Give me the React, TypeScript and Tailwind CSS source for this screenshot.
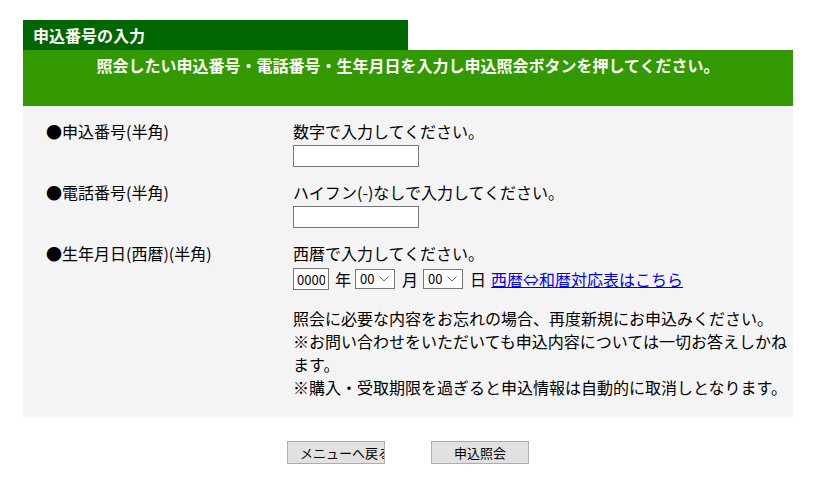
import React from "react"

const FONT = "font-['Noto_Sans_CJK_JP',sans-serif]"

function Chevron() {
  return (
    <svg
      width="10"
      height="6"
      viewBox="0 0 10 6"
      className="pointer-events-none absolute right-[6px] top-1/2 -translate-y-1/2"
    >
      <path d="M0.5 0.5 L5 5 L9.5 0.5" fill="none" stroke="#666" strokeWidth="1" />
    </svg>
  )
}

function SmallSelect() {
  return (
    <div className="relative h-[20px] w-[40px]">
      <select
        defaultValue="00"
        className={`${FONT} block h-[20px] w-[40px] appearance-none border border-[#767676] bg-white py-0 pl-[4px] text-[13px] leading-[18px] text-black`}
      >
        <option value="00">00</option>
      </select>
      <Chevron />
    </div>
  )
}

function Row({
  label,
  children,
}: {
  label: string
  children: React.ReactNode
}) {
  return (
    <div className="flex">
      <div className="w-[247px] shrink-0">{label}</div>
      <div className="w-[500px]">{children}</div>
    </div>
  )
}

function TextBox() {
  return (
    <input
      type="text"
      className="mt-[2px] block h-[22px] w-[126px] border border-[#767676] bg-white"
    />
  )
}

export default function App() {
  return (
    <div className={`${FONT} h-[488px] w-[816px] bg-white text-[16px] leading-[23px] text-black`}>
      <div className="box-content w-[770px] pl-[23px] pt-[20px]">
        {/* タイトル */}
        <div className="h-[30px] w-[385px] bg-[#006600] pl-[10px] font-bold leading-[30px] text-white">
          申込番号の入力
        </div>
        <div className="h-[56px] bg-[#339900] pt-[4px] text-center font-bold text-white">
          照会したい申込番号・電話番号・生年月日を入力し申込照会ボタンを押してください。
        </div>

        {/* 入力欄 */}
        <div className="flex flex-col gap-[14px] bg-[#f4f4f4] pb-[18px] pl-[23px] pt-[14px]">
          <Row label="●申込番号(半角)">
            <div>数字で入力してください。</div>
            <TextBox />
          </Row>
          <Row label="●電話番号(半角)">
            <div>ハイフン(-)なしで入力してください。</div>
            <TextBox />
          </Row>
          <Row label="●生年月日(西暦)(半角)">
            <div>西暦で入力してください。</div>
            <div className="mt-[3px] flex h-[22px] items-center">
              <input
                type="text"
                defaultValue="0000"
                className={`${FONT} h-[22px] w-[36px] border border-[#767676] bg-white px-[3px] text-[13px] text-black`}
              />
              <span className="ml-[6px] mr-[4px]">年</span>
              <SmallSelect />
              <span className="ml-[7px] mr-[5px]">月</span>
              <SmallSelect />
              <span className="ml-[7px] mr-[5px]">日</span>
              <a href="#" className="text-[#0000ee] underline">
                西暦⇔和暦対応表はこちら
              </a>
            </div>
            <div className="mt-[17px]">
              <div>照会に必要な内容をお忘れの場合、再度新規にお申込みください。</div>
              <div>※お問い合わせをいただいても申込内容については一切お答えしかねます。</div>
              <div>※購入・受取期限を過ぎると申込情報は自動的に取消しとなります。</div>
            </div>
          </Row>
        </div>

        {/* ボタン */}
        <div className="mt-[24px] flex justify-center gap-[46px]">
          <button
            type="button"
            className="h-[23px] w-[98px] overflow-hidden whitespace-nowrap border border-[#adadad] bg-[#e1e1e1] pl-[12px] text-left text-[13px] leading-[21px] text-black"
          >
            メニューへ戻る
          </button>
          <button
            type="button"
            className="h-[23px] w-[98px] border border-[#adadad] bg-[#e1e1e1] text-center text-[13px] leading-[21px] text-black"
          >
            申込照会
          </button>
        </div>
      </div>
    </div>
  )
}
